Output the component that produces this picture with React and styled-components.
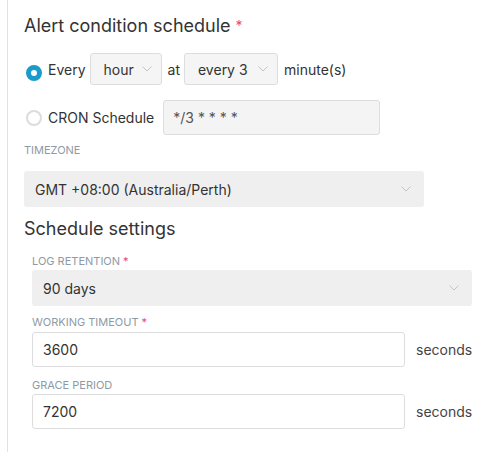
import React from "react";
import styled, { createGlobalStyle } from "styled-components";

const Global = createGlobalStyle`
  body {
    margin: 0;
    background: #fff;
    font-family: Inter, "Noto Sans", sans-serif;
    color: #333;
  }
`;

const Panel = styled.div`
  margin-left: 7px;
  border-left: 1px solid #e2e2e2;
  min-height: 452px;
  padding: 14px 0 0 16px;
  box-sizing: border-box;
`;

const Title = styled.h2`
  margin: 0;
  font-size: 18px;
  font-weight: 400;
  line-height: 24px;
  color: #333;
`;

const Required = styled.span`
  color: #e8467c;
  font-size: ${(p) => (p.small ? "11px" : "14px")};
  margin-left: ${(p) => (p.small ? 3 : 5)}px;
  vertical-align: top;
`;

const RadioRow = styled.div`
  display: flex;
  align-items: center;
  gap: 6px;
  margin-top: ${(p) => p.top}px;
  height: ${(p) => p.h}px;
  font-size: 14px;
`;

const Radio = styled.span`
  width: 16px;
  height: 16px;
  border-radius: 50%;
  box-sizing: border-box;
  border: ${(p) => (p.checked ? "5px solid #1b9bcb" : "2px solid #dcdcdc")};
  background: #fff;
  margin: ${(p) => (p.checked ? "7px 0 0 2px" : "1px 0 0 2px")};
  flex-shrink: 0;
`;

const Dropdown = styled.div`
  display: flex;
  align-items: center;
  justify-content: space-between;
  box-sizing: border-box;
  width: ${(p) => p.w}px;
  height: 32px;
  padding: 0 9px 0 13px;
  margin-left: -2px;
  background: #f5f5f5;
  border: 1px solid #ddd;
  border-radius: 3px;
  font-size: 14px;
  color: #333;
`;

const CronInput = styled.div`
  box-sizing: border-box;
  width: 217px;
  height: 35px;
  margin-left: 3px;
  padding: 0 9px;
  display: flex;
  align-items: center;
  background: #f4f4f4;
  border: 1px solid #ddd;
  border-radius: 3px;
  font-size: 14px;
  color: #555;
`;

const Label = styled.div`
  font-size: 11px;
  line-height: 14px;
  text-transform: uppercase;
  color: #8e9aa6;
  margin-top: ${(p) => p.top}px;
  margin-bottom: ${(p) => p.bottom}px;
`;

const Select = styled.div`
  display: flex;
  align-items: center;
  justify-content: space-between;
  box-sizing: border-box;
  width: ${(p) => p.w}px;
  height: 36px;
  padding: 0 13px 0 11px;
  background: #efefef;
  border-radius: 3px;
  font-size: 14px;
  color: #333;
`;

const SubTitle = styled(Title)`
  margin-top: 10px;
`;

const Section = styled.div`
  padding-left: 8px;
`;

const FieldRow = styled.div`
  display: flex;
  align-items: center;
  gap: 11px;
`;

const TextInput = styled.div`
  box-sizing: border-box;
  width: 373px;
  height: 35px;
  padding: 0 10px;
  display: flex;
  align-items: center;
  background: #fff;
  border: 1px solid #ddd;
  border-radius: 3px;
  font-size: 14px;
  color: #333;
`;

const Unit = styled.span`
  font-size: 14px;
  color: #444;
`;

const Chevron = ({ size = 10 }) => (
  <svg width={size} height={size * 0.6} viewBox="0 0 10 6" fill="none">
    <path d="M0.5 0.5 L5 5 L9.5 0.5" stroke="#c4c4c4" strokeWidth="1" />
  </svg>
);

export default function App() {
  return (
    <>
      <Global />
      <Panel>
        <Title>
          Alert condition schedule<Required>*</Required>
        </Title>
        <RadioRow top={15} h={32}>
          <Radio checked />
          <span>Every</span>
          <Dropdown w={72}>
            hour <Chevron />
          </Dropdown>
          <span>at</span>
          <Dropdown w={94}>
            every 3 <Chevron />
          </Dropdown>
          <span>minute(s)</span>
        </RadioRow>
        <RadioRow top={15} h={35}>
          <Radio />
          <span>CRON Schedule</span>
          <CronInput>*/3 * * * *</CronInput>
        </RadioRow>
        <Label top={8} bottom={14}>Timezone</Label>
        <Select w={400}>
          GMT +08:00 (Australia/Perth) <Chevron />
        </Select>
        <SubTitle>Schedule settings</SubTitle>
        <Section>
          <Label top={13} bottom={2}>
            Log retention<Required small>*</Required>
          </Label>
          <Select w={440}>
            90 days <Chevron />
          </Select>
          <Label top={9} bottom={3}>
            Working timeout<Required small>*</Required>
          </Label>
          <FieldRow>
            <TextInput>3600</TextInput>
            <Unit>seconds</Unit>
          </FieldRow>
          <Label top={11} bottom={2}>Grace period</Label>
          <FieldRow>
            <TextInput>7200</TextInput>
            <Unit>seconds</Unit>
          </FieldRow>
        </Section>
      </Panel>
    </>
  );
}
